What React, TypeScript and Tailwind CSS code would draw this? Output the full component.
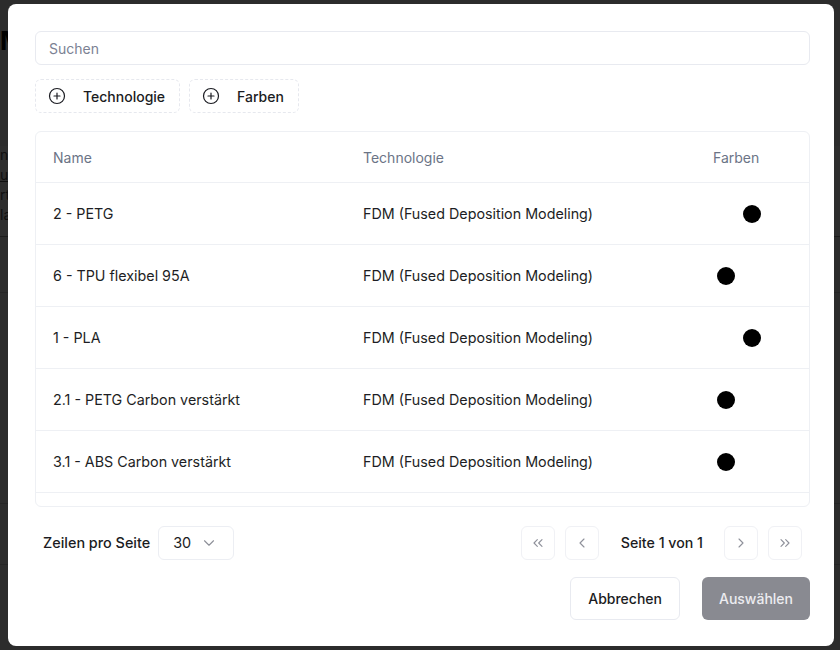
import {
  CirclePlus,
  ChevronDown,
  ChevronLeft,
  ChevronRight,
  ChevronsLeft,
  ChevronsRight,
} from "lucide-react"

type Material = {
  id: number
  name: string
  technology: string
  colors: string[]
}

const materials: Material[] = [
  { id: 1, name: "2 - PETG", technology: "FDM (Fused Deposition Modeling)", colors: ["#ffffff", "#000000"] },
  { id: 2, name: "6 - TPU flexibel 95A", technology: "FDM (Fused Deposition Modeling)", colors: ["#000000"] },
  { id: 3, name: "1 - PLA", technology: "FDM (Fused Deposition Modeling)", colors: ["#ffffff", "#000000"] },
  { id: 4, name: "2.1 - PETG Carbon verstärkt", technology: "FDM (Fused Deposition Modeling)", colors: ["#000000"] },
  { id: 5, name: "3.1 - ABS Carbon verstärkt", technology: "FDM (Fused Deposition Modeling)", colors: ["#000000"] },
]

const FilterButton = ({ label }: { label: string }) => (
  <button className="flex h-[34px] items-center gap-[17px] rounded-md border border-dashed border-[#e6e8ee] pl-3 pr-[14px] text-[14px] font-medium text-[#1b1c22]">
    <CirclePlus size={18} strokeWidth={1.6} />
    {label}
  </button>
)

const PageButton = ({ children }: { children: React.ReactNode }) => (
  <button className="flex h-[34px] w-[34px] items-center justify-center rounded-md border border-[#f0f1f5] text-[#8f919b]">
    {children}
  </button>
)

const BackgroundPage = () => (
  <div className="flex h-full flex-col bg-[#f2f2f2]">
    <div className="h-[26px]" />
    <div className="h-[30px] text-[26px] leading-[30px] font-bold text-black">Materialien</div>
    <div className="h-[90px]" />
    <div className="flex h-[90px] flex-col gap-[2px] bg-white text-[14px] leading-[18px] text-[#555]">
      <span>n</span>
      <span className="underline">u</span>
      <span>rt</span>
      <span>la</span>
    </div>
    <div className="h-px bg-[#999]" />
    <div className="h-[55px]" />
    <div className="h-px bg-[#ccc]" />
    <div className="h-[210px]" />
    <div className="h-px bg-[#ccc]" />
    <div className="h-[60px]" />
    <div className="h-px bg-[#ccc]" />
  </div>
)

export default function App() {
  return (
    <div
      className="relative h-[650px] w-full overflow-hidden"
      style={{ fontFamily: "Inter, 'Noto Sans', sans-serif" }}
    >
      <BackgroundPage />
      <div className="absolute inset-0 bg-black/[0.82]" />

      <div className="absolute top-[4px] left-[8px] flex h-[642px] w-[826px] flex-col rounded-lg bg-white pt-[27px] pr-[24px] pb-[26px] pl-[27px]">
        <input
          placeholder="Suchen"
          className="h-[34px] w-full rounded-md border border-[#e8eaf0] px-[13px] text-[14px] text-[#1b1c22] outline-none placeholder:text-[#7b8193]"
        />

        <div className="mt-[14px] flex gap-[9px]">
          <FilterButton label="Technologie" />
          <FilterButton label="Farben" />
        </div>

        <div className="mt-[18px] h-[376px] overflow-hidden rounded-md border border-[#eef0f4]">
          <div className="grid h-[51px] grid-cols-[310px_350px_1fr] items-center border-b border-[#eef0f4] text-[14px] text-[#6b7486]">
            <div className="pl-[17px]">Name</div>
            <div className="pl-[17px]">Technologie</div>
            <div className="pl-[17px]">Farben</div>
          </div>
          {materials.map((m) => (
            <div
              key={m.id}
              className="grid h-[62px] grid-cols-[310px_350px_1fr] items-center border-b border-[#eef0f4] text-[14.3px] text-[#1d1e24]"
            >
              <div className="pl-[17px]">{m.name}</div>
              <div className="pl-[17px]">{m.technology}</div>
              <div className="flex gap-[8px] pl-[21px]">
                {m.colors.map((c, i) => (
                  <span
                    key={i}
                    className="h-[18px] w-[18px] rounded-full"
                    style={{ backgroundColor: c }}
                  />
                ))}
              </div>
            </div>
          ))}
        </div>

        <div className="mt-[19px] flex items-center justify-between pr-[8px] pl-[8px]">
          <div className="flex items-center gap-[8px]">
            <span className="text-[14.4px] font-medium text-[#1b1c22]">Zeilen pro Seite</span>
            <button className="flex h-[34px] w-[76px] items-center justify-between rounded-md border border-[#eceef3] pr-[15px] pl-[14px] text-[14.4px] text-[#1b1c22]">
              30
              <ChevronDown size={18} strokeWidth={1.5} className="text-[#8d8f98]" />
            </button>
          </div>
          <div className="flex items-center gap-[10px]">
            <PageButton>
              <ChevronsLeft size={16} strokeWidth={1.7} />
            </PageButton>
            <PageButton>
              <ChevronLeft size={16} strokeWidth={1.7} />
            </PageButton>
            <span className="pr-[11px] pl-[12px] text-[14.2px] font-medium text-[#1b1c22]">Seite 1 von 1</span>
            <PageButton>
              <ChevronRight size={16} strokeWidth={1.7} />
            </PageButton>
            <PageButton>
              <ChevronsRight size={16} strokeWidth={1.7} />
            </PageButton>
          </div>
        </div>

        <div className="mt-[17px] flex justify-end gap-[22px]">
          <button className="h-[43px] rounded-md border border-[#e8eaf0] bg-white px-[17px] text-[14px] font-medium text-[#1b1c22]">
            Abbrechen
          </button>
          <button className="h-[43px] rounded-md bg-[#898a91] px-[17px] text-[14px] font-medium text-[#ececf0]">
            Auswählen
          </button>
        </div>
      </div>
    </div>
  )
}
